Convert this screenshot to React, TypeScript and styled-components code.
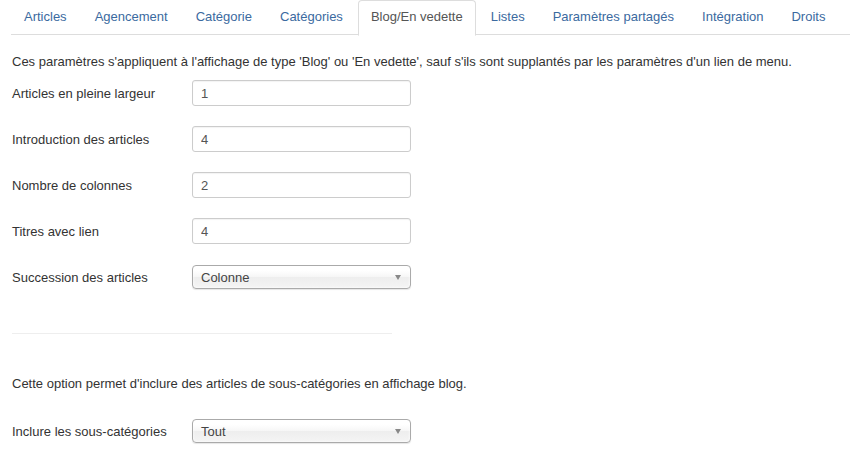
import React from "react";
import styled, { createGlobalStyle } from "styled-components";

const GlobalStyle = createGlobalStyle`
  html, body {
    margin: 0;
    padding: 0;
    background: #fff;
  }
  body {
    font-family: "Liberation Sans", Arial, sans-serif;
    font-size: 13px;
    color: #333;
  }
`;

const Page = styled.div`
  padding-left: 11px;
`;

const TabBar = styled.ul`
  display: flex;
  margin: 0;
  padding: 0;
  list-style: none;
  height: 34px;
  border-bottom: 1px solid #ddd;
`;

const Tab = styled.li<{ active?: boolean }>`
  display: flex;
  align-items: center;
  height: 31px;
  padding: 0 12px 3px;
  margin-right: 2px;
  box-sizing: content-box;
  border: 1px solid ${({ active }) => (active ? "#ddd" : "transparent")};
  border-bottom-color: ${({ active }) => (active ? "#fff" : "transparent")};
  border-radius: 4px 4px 0 0;
  background: ${({ active }) => (active ? "#fff" : "transparent")};
  color: ${({ active }) => (active ? "#555" : "#3b6aa0")};
  cursor: pointer;
  white-space: nowrap;
`;

const Pane = styled.div`
  padding: 18px 0 0 1px;
`;

const Description = styled.p<{ gap?: number }>`
  margin: 0 0 ${({ gap }) => gap ?? 9}px;
  line-height: 18px;
`;

const Row = styled.div`
  display: flex;
  align-items: center;
  height: 26px;
  margin-bottom: 20px;
`;

const Label = styled.label`
  width: 180px;
  flex: none;
`;

const TextInput = styled.input`
  box-sizing: border-box;
  width: 219px;
  height: 26px;
  padding: 0 8px;
  border: 1px solid #ccc;
  border-radius: 3px;
  font-family: inherit;
  font-size: 13px;
  color: #555;
  outline: none;
  box-shadow: inset 0 1px 1px rgba(0, 0, 0, 0.05);
`;

const Select = styled.div`
  box-sizing: border-box;
  display: flex;
  align-items: center;
  justify-content: space-between;
  width: 219px;
  height: 24px;
  padding: 0 9px 0 8px;
  border: 1px solid #aaa;
  border-radius: 4px;
  background: linear-gradient(#fff 20%, #f6f6f6 50%, #eee 52%, #f4f4f4 100%);
  box-shadow: 0 0 3px #fff inset, 0 1px 1px rgba(0, 0, 0, 0.1);
  color: #444;
  cursor: pointer;
`;

const Caret = styled.span`
  width: 0;
  height: 0;
  border-left: 3.5px solid transparent;
  border-right: 3.5px solid transparent;
  border-top: 5px solid #888;
`;

const Divider = styled.hr`
  width: 380px;
  margin: 43px 0 41px;
  border: none;
  border-top: 1px solid #eee;
`;

const tabs = [
  "Articles",
  "Agencement",
  "Catégorie",
  "Catégories",
  "Blog/En vedette",
  "Listes",
  "Paramètres partagés",
  "Intégration",
  "Droits",
];

const fields = [
  { label: "Articles en pleine largeur", value: "1" },
  { label: "Introduction des articles", value: "4" },
  { label: "Nombre de colonnes", value: "2" },
  { label: "Titres avec lien", value: "4" },
];

const Dropdown: React.FC<{ value: string }> = ({ value }) => (
  <Select>
    <span>{value}</span>
    <Caret />
  </Select>
);

export default function App() {
  return (
    <Page>
      <GlobalStyle />
      <TabBar>
        {tabs.map((t) => (
          <Tab key={t} active={t === "Blog/En vedette"}>
            {t}
          </Tab>
        ))}
      </TabBar>
      <Pane>
        <Description>
          Ces paramètres s'appliquent à l'affichage de type 'Blog' ou 'En vedette', sauf s'ils sont
          supplantés par les paramètres d'un lien de menu.
        </Description>
        {fields.map((f) => (
          <Row key={f.label}>
            <Label>{f.label}</Label>
            <TextInput defaultValue={f.value} />
          </Row>
        ))}
        <Row>
          <Label>Succession des articles</Label>
          <Dropdown value="Colonne" />
        </Row>
        <Divider />
        <Description gap={25}>
          Cette option permet d'inclure des articles de sous-catégories en affichage blog.
        </Description>
        <Row>
          <Label>Inclure les sous-catégories</Label>
          <Dropdown value="Tout" />
        </Row>
      </Pane>
    </Page>
  );
}
